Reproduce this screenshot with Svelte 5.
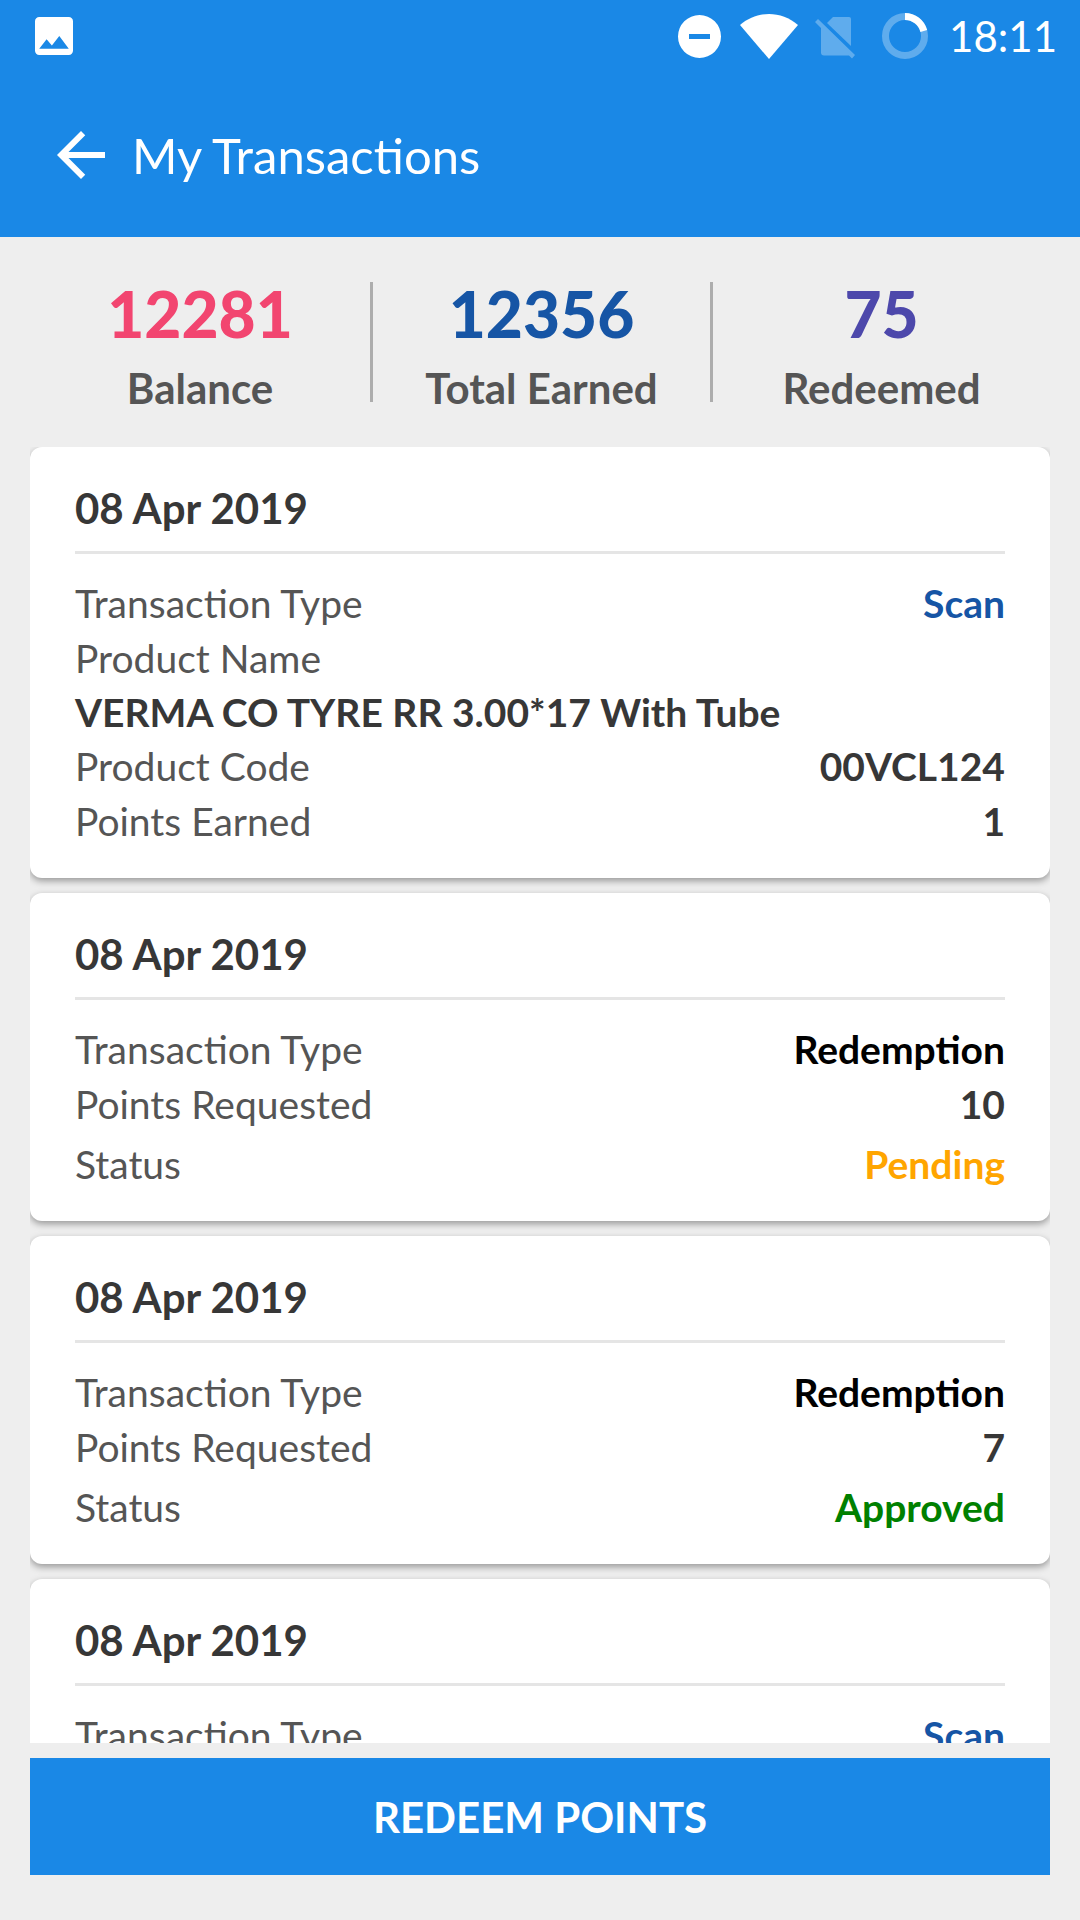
<script>
    const stats = [
        {value: 12281, label: 'Balance', tone: 'pink'},
        {value: 12356, label: 'Total Earned', tone: 'blue'},
        {value: 75, label: 'Redeemed', tone: 'purple'}
    ];

    const scan = {
        date: '08 Apr 2019',
        rows: [
            {label: 'Transaction Type', value: 'Scan', tone: 'blue'},
            {label: 'Product Name', value: 'VERMA CO TYRE RR 3.00*17 With Tube', stacked: true},
            {label: 'Product Code', value: '00VCL124'},
            {label: 'Points Earned', value: '1'}
        ]
    };

    const redemption = (points, status, tone)=>({
        date: '08 Apr 2019',
        rows: [
            {label: 'Transaction Type', value: 'Redemption', tone: 'black'},
            {label: 'Points Requested', value: points},
            {label: 'Status', value: status, tone, spaced: true}
        ]
    });

    const transactions = [
        scan,
        redemption(10, 'Pending', 'orange'),
        redemption(7, 'Approved', 'green'),
        scan
    ];
</script>

<div class="screen">
    <header>
        <div class="statusbar">
            <svg class="photo" viewBox="3 3 18 18" aria-hidden="true">
                <path fill-rule="evenodd" d="M21 19V5a2 2 0 0 0-2-2H5a2 2 0 0 0-2 2v14a2 2 0 0 0 2 2h14a2 2 0 0 0 2-2zM8.5 13.5l2.5 3L14.5 12l4.5 6H5z"/>
            </svg>
            <div class="indicators">
                <svg viewBox="0 0 68 48" aria-hidden="true">
                    <path fill-rule="evenodd" d="M11 24.5a21.5 21.5 0 1 0 43 0a21.5 21.5 0 1 0-43 0zM22 22h21v5H22z"/>
                </svg>
                <svg viewBox="0 0 68 48" aria-hidden="true">
                    <path d="M5 13C22-1.7 46-1.7 63 13L34 47z"/>
                </svg>
                <svg class="faded" viewBox="0 0 68 48" aria-hidden="true">
                    <path d="M24 11l6-6h16a2 2 0 0 1 2 2v27z"/>
                    <path d="M12 10l3-3l37 36l-3 3.5l-3-3H21a3 3 0 0 1-3-3V16z"/>
                </svg>
                <svg viewBox="0 0 68 48" aria-hidden="true">
                    <circle class="track" cx="34" cy="24" r="19.5"/>
                    <path class="arc" d="M34 4.5A19.5 19.5 0 0 1 52.8 19"/>
                </svg>
                <time>18:11</time>
            </div>
        </div>
        <div class="appbar">
            <button class="back" aria-label="Back">
                <svg viewBox="0 0 24 24" aria-hidden="true">
                    <path d="M20 11H7.83l5.59-5.59L12 4l-8 8 8 8 1.41-1.41L7.83 13H20z"/>
                </svg>
            </button>
            <h1>My Transactions</h1>
        </div>
    </header>

    <section class="stats">
        {#each stats as stat}
            <div class="stat">
                <strong class={stat.tone}>{stat.value}</strong>
                <span>{stat.label}</span>
            </div>
        {/each}
    </section>

    <main>
        {#each transactions as transaction}
            <article>
                <h2>{transaction.date}</h2>
                <dl>
                    {#each transaction.rows as row}
                        <div class="row" class:stacked={row.stacked} class:spaced={row.spaced}>
                            <dt>{row.label}</dt>
                            <dd class={row.tone}>{row.value}</dd>
                        </div>
                    {/each}
                </dl>
            </article>
        {/each}
    </main>

    <button class="redeem">REDEEM POINTS</button>
</div>

<style>
    :global(body){
        margin: 0;
        background: #eeeeee;
    }

    .screen{
        display: flex;
        flex-direction: column;
        height: 100vh;
        font-family: Lato, "Open Sans", sans-serif;
        color: #555555;
    }

    header{
        background: #1a88e6;
        color: #ffffff;
    }

    svg{
        display: block;
        fill: currentColor;
    }

    .statusbar{
        display: flex;
        align-items: center;
        justify-content: space-between;
        height: 72px;
        padding: 0 23px 0 35px;
    }

    .photo{
        width: 38px;
        height: 38px;
    }

    .indicators{
        display: flex;
        align-items: center;
    }

    .indicators svg{
        width: 68px;
        height: 48px;
    }

    .indicators .faded{
        opacity: 0.3;
    }

    .track, .arc{
        fill: none;
        stroke: #ffffff;
        stroke-width: 7px;
    }

    .track{
        stroke-opacity: 0.3;
    }

    time{
        margin-left: 10px;
        font-size: 42px;
        line-height: 50px;
    }

    .appbar{
        display: flex;
        align-items: center;
        gap: 15px;
        height: 165px;
        padding: 0 45px;
    }

    button{
        border: 0;
        font-family: inherit;
        color: #ffffff;
        cursor: pointer;
    }

    .back{
        padding: 0;
        background: none;
    }

    .back svg{
        width: 72px;
        height: 72px;
    }

    h1{
        margin: 0;
        font-size: 49px;
        line-height: 58px;
        font-weight: 400;
    }

    .stats{
        display: grid;
        grid-template-columns: repeat(3, 1fr);
        padding: 45px 30px 38px;
    }

    .stat{
        display: flex;
        flex-direction: column;
        align-items: center;
        gap: 21px;
        font-weight: 700;
    }

    .stat + .stat{
        padding-left: 3px;
        background: linear-gradient(#adadad, #adadad) left top / 3px 120px no-repeat;
    }

    .stat strong{
        font-size: 64px;
        line-height: 64px;
    }

    .stat span{
        font-size: 42px;
        line-height: 42px;
    }

    main{
        flex: 1;
        min-height: 0;
        margin: 0 30px;
        overflow-y: auto;
        scrollbar-width: none;
    }

    article{
        margin-bottom: 15px;
        padding: 36px 45px 29px;
        border-radius: 12px;
        background: #ffffff;
        box-shadow: 0 3px 7px rgba(0, 0, 0, 0.36);
    }

    h2{
        margin: 0;
        padding-bottom: 18px;
        border-bottom: 3px solid #e5e5e5;
        font-size: 42px;
        line-height: 50px;
        font-weight: 700;
        color: #373737;
    }

    dl{
        margin: 22px 0 0;
        font-size: 39px;
        line-height: 55px;
    }

    .row{
        display: flex;
        justify-content: space-between;
    }

    .row.stacked{
        display: block;
        line-height: 54px;
    }

    .row.spaced{
        margin-top: 5px;
    }

    dd{
        margin: 0;
        font-weight: 700;
        color: #373737;
    }

    .pink{
        color: #f24570;
    }

    .blue{
        color: #1655a5;
    }

    .purple{
        color: #4d48ab;
    }

    .black{
        color: #000000;
    }

    .orange{
        color: #ffa500;
    }

    .green{
        color: #008000;
    }

    .redeem{
        margin: 15px 30px 45px;
        padding: 34px 32px 32px;
        background: #1a88e6;
        font-size: 42px;
        line-height: 51px;
        font-weight: 700;
    }
</style>
